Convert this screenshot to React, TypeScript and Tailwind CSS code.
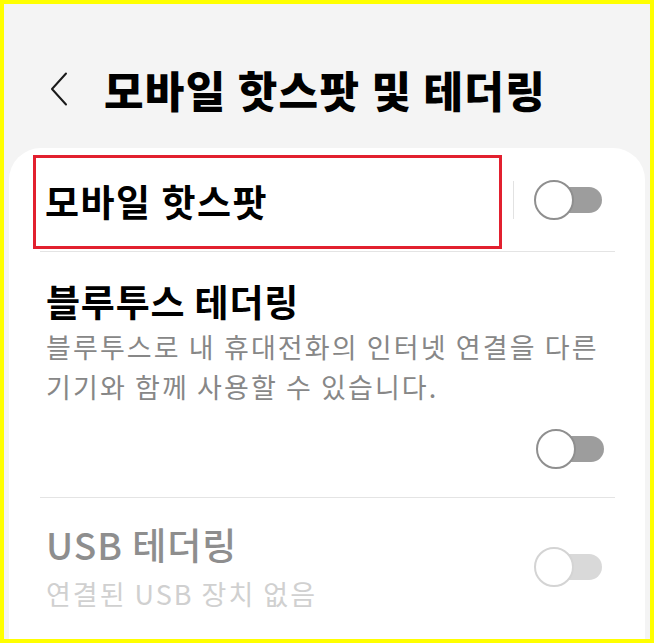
const FONT = { fontFamily: '"Noto Sans CJK KR", "Noto Sans", sans-serif' };

// 토글 스위치 (꺼진 상태)
function Toggle({ disabled = false }: { disabled?: boolean }) {
  return (
    <div className="relative h-[40px] w-[68px] shrink-0">
      <div
        className={`absolute right-0 top-[7px] h-[26px] w-[52px] rounded-full ${
          disabled ? "bg-[#d9d9d9]" : "bg-[#9d9d9d]"
        }`}
      />
      <div
        className={`absolute left-0 top-0 h-[40px] w-[40px] rounded-full border-2 bg-white ${
          disabled ? "border-[#d4d4d4]" : "border-[#8f8f8f]"
        }`}
      />
    </div>
  );
}

export default function App() {
  return (
    <div
      className="flex h-[643px] w-[654px] flex-col overflow-hidden border-4 border-[#ffff00] bg-[#f4f4f4]"
      style={FONT}
    >
      {/* 헤더 */}
      <header className="flex h-[144px] items-center gap-[36px] pl-[46px] pt-[26px]">
        <svg width="18" height="34" viewBox="0 0 18 34" fill="none" className="shrink-0">
          <polyline points="16,1.5 2,17 16,32.5" stroke="#1a1a1a" strokeWidth="2" strokeLinecap="round" strokeLinejoin="round" />
        </svg>
        <h1 className="text-[43px] font-black leading-[54px] tracking-[1.3px] text-black">모바일 핫스팟 및 테더링</h1>
      </header>

      {/* 설정 카드 */}
      <main className="mx-[5px] flex-1 rounded-t-[32px] bg-white px-[35px]">
        {/* 모바일 핫스팟 */}
        <div className="flex h-[103px] items-center">
          <div className="-ml-[11px] mt-[7px] flex h-[94px] w-[469px] items-center self-start border-[3px] border-[#e2202f] pl-[9px]">
            <span className="text-[37px] font-bold tracking-[1.5px] text-black">모바일 핫스팟</span>
          </div>
          <div className="ml-[11px] h-[38px] w-px bg-[#e2e2e2]" />
          <div className="ml-auto pr-[8px]">
            <Toggle />
          </div>
        </div>
        <div className="-ml-[4px] -mr-[5px] h-px bg-[#e4e4e4]" />

        {/* 블루투스 테더링 */}
        <div className="flex flex-col pl-[2px] pt-[25px] pb-[28px]">
          <span className="text-[37px] font-bold leading-[48px] tracking-[0.8px] text-black">블루투스 테더링</span>
          <p className="mt-[2px] text-[27px] leading-[40px] tracking-[2.1px] text-[#878787]">
            블루투스로 내 휴대전화의 인터넷 연결을 다른
            <br />
            기기와 함께 사용할 수 있습니다.
          </p>
          <div className="mt-[22px] flex justify-end pr-[6px]">
            <Toggle />
          </div>
        </div>
        <div className="-ml-[4px] -mr-[5px] h-px bg-[#e4e4e4]" />

        {/* USB 테더링 */}
        <div className="flex items-center pl-[2px] pt-[22px]">
          <div className="flex flex-col">
            <span className="text-[37px] font-medium leading-[48px] tracking-[1px] text-[#8e8e8e]">USB 테더링</span>
            <span className="mt-[6px] text-[27px] leading-[40px] tracking-[2px] text-[#d0d0d0]">연결된 USB 장치 없음</span>
          </div>
          <div className="ml-auto pr-[8px]">
            <Toggle disabled />
          </div>
        </div>
      </main>
    </div>
  );
}
